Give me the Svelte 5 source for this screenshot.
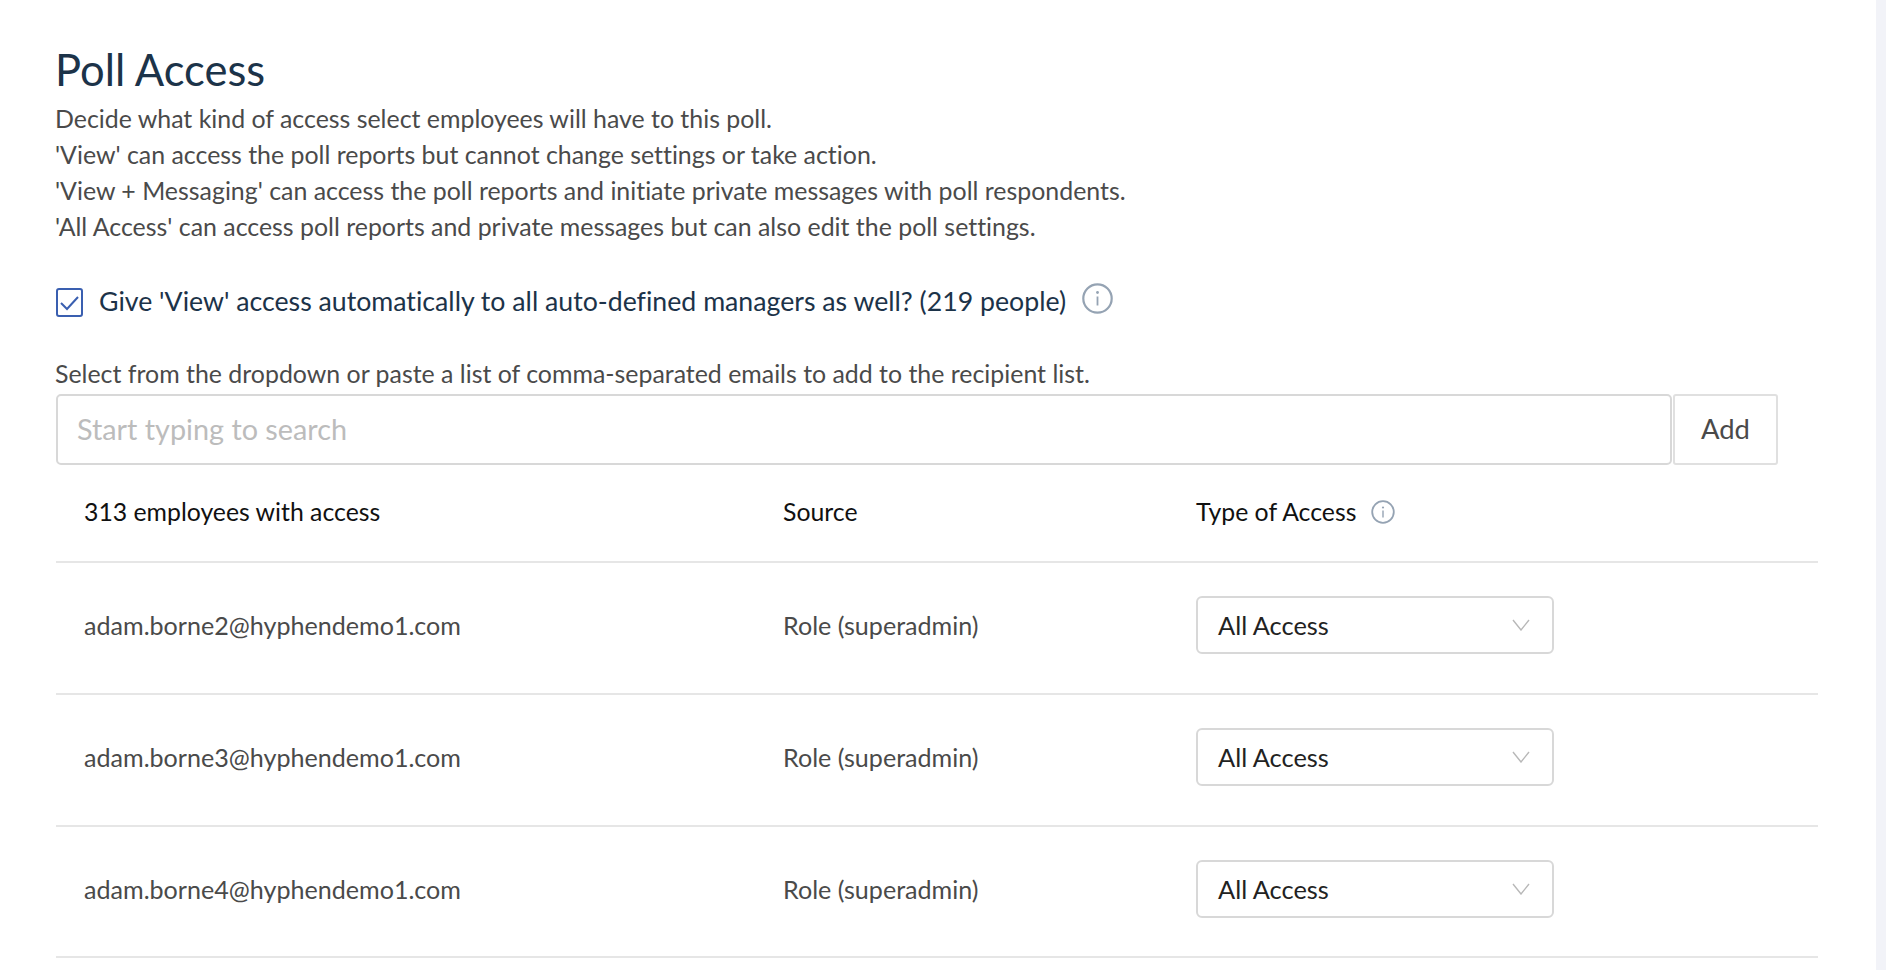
<script lang="ts">
  const rows = [
    { email: 'adam.borne2@hyphendemo1.com', source: 'Role (superadmin)', access: 'All Access' },
    { email: 'adam.borne3@hyphendemo1.com', source: 'Role (superadmin)', access: 'All Access' },
    { email: 'adam.borne4@hyphendemo1.com', source: 'Role (superadmin)', access: 'All Access' },
  ]

  let autoView = $state(true)
  let search = $state('')
</script>

<div class="page">
  <main class="panel">
    <h1>Poll Access</h1>
    <div class="intro">
      <p>Decide what kind of access select employees will have to this poll.</p>
      <p>'View' can access the poll reports but cannot change settings or take action.</p>
      <p>'View + Messaging' can access the poll reports and initiate private messages with poll respondents.</p>
      <p>'All Access' can access poll reports and private messages but can also edit the poll settings.</p>
    </div>

    <div class="auto-row">
      <button
        class="check"
        type="button"
        role="checkbox"
        aria-checked={autoView}
        aria-label="Give view access"
        onclick={() => (autoView = !autoView)}
      >
        {#if autoView}
          <svg viewBox="0 0 27 29" width="27" height="29" fill="none">
            <path d="M5 15l6 6L22 9" stroke="#3a5fb0" stroke-width="2" />
          </svg>
        {/if}
      </button>
      <span class="auto-label">Give 'View' access automatically to all auto-defined managers as well? (219 people)</span>
      <svg class="info info--lg" viewBox="0 0 31 31" width="31" height="31" fill="none">
        <circle cx="15.5" cy="15.5" r="14.2" stroke="#95a3b3" stroke-width="2.2" />
        <circle cx="15.5" cy="9.5" r="1.4" fill="#95a3b3" />
        <path d="M15.5 13.5v9" stroke="#95a3b3" stroke-width="1.8" />
      </svg>
    </div>

    <p class="hint">Select from the dropdown or paste a list of comma-separated emails to add to the recipient list.</p>
    <div class="search-row">
      <input class="search" placeholder="Start typing to search" bind:value={search} />
      <button class="add" type="button">Add</button>
    </div>

    <div class="table">
      <div class="row row--head">
        <span>313 employees with access</span>
        <span>Source</span>
        <span class="type-head">
          Type of Access
          <svg class="info" viewBox="0 0 24 24" width="24" height="24" fill="none">
            <circle cx="12" cy="12" r="10.8" stroke="#95a3b3" stroke-width="1.8" />
            <circle cx="12" cy="7.5" r="1.1" fill="#95a3b3" />
            <path d="M12 10.5v7" stroke="#95a3b3" stroke-width="1.4" />
          </svg>
        </span>
      </div>
      {#each rows as r}
        <div class="row">
          <span>{r.email}</span>
          <span>{r.source}</span>
          <div class="select">
            <span>{r.access}</span>
            <svg viewBox="0 0 18 12" width="18" height="12" fill="none">
              <path d="M1 1l8 10 8-10" stroke="#b8b8b8" stroke-width="1.4" />
            </svg>
          </div>
        </div>
      {/each}
    </div>
  </main>
</div>

<style>
  :global(body) {
    background: #f2f3f8;
  }

  .page {
    height: 970px;
    overflow: hidden;
    font-family: Lato, sans-serif;
    font-variant-ligatures: none;
    color: #4a4a4a;
  }

  .panel {
    box-sizing: border-box;
    width: 1876px;
    height: 970px;
    padding: 43px 58px 0 56px;
    background: #fff;
  }

  h1 {
    margin: 0 0 0 -1px;
    font-size: 43.5px;
    line-height: 52px;
    font-weight: 400;
    color: #1c3349;
  }

  .intro {
    font-size: 24.9px;
    line-height: 36px;
    margin: 5px 0 0 -1px;
  }

  .intro p {
    margin: 0;
  }

  .auto-row {
    display: flex;
    align-items: center;
    margin-top: 36px;
    height: 37px;
  }

  .check {
    box-sizing: border-box;
    width: 27px;
    height: 29px;
    padding: 0;
    margin-top: 7px;
    border: 2px solid #3a5fb0;
    border-radius: 3px;
    background: #fff;
    display: flex;
  }

  .check svg {
    margin: -2px;
    flex: none;
  }

  .auto-label {
    margin-left: 16px;
    font-size: 26.7px;
    color: #1c3349;
    margin-top: 4px;
  }

  .info--lg {
    margin: 0 0 0 16px;
  }

  .hint {
    margin: 38px 0 0 -1px;
    font-size: 24.9px;
    line-height: 36px;
  }

  .search-row {
    display: flex;
    margin-top: 3px;
    margin-right: 40px;
    gap: 1px;
  }

  .search {
    flex: 1;
    box-sizing: border-box;
    height: 71px;
    padding: 0 19px 2px;
    border: 2px solid #d8d8d8;
    border-radius: 5px;
    outline: none;
    font: 400 28.8px Lato, sans-serif;
    color: #4a4a4a;
  }

  .search::placeholder {
    color: #bcbcbc;
  }

  .add {
    box-sizing: border-box;
    width: 105px;
    height: 71px;
    padding: 0 0 2px;
    border: 2px solid #e0e0e0;
    border-radius: 3px;
    background: #fff;
    font: 400 27.4px Lato, sans-serif;
    color: #4a4a4a;
  }

  .row {
    display: grid;
    grid-template-columns: 699px 413px 1fr;
    align-items: center;
    box-sizing: border-box;
    height: 131.67px;
    padding: 0 0 6px 28px;
    border-bottom: 2px solid #e6e6e6;
    font-size: 25.1px;
  }

  .row--head {
    height: 98.4px;
    padding-bottom: 3px;
    font-size: 24.8px;
    color: #111;
  }

  .type-head {
    display: flex;
    align-items: center;
    gap: 15px;
  }

  .select {
    box-sizing: border-box;
    width: 358px;
    height: 58px;
    padding: 0 22px 0 20px;
    display: flex;
    align-items: center;
    justify-content: space-between;
    border: 2px solid #d8d8d8;
    border-radius: 6px;
    font-size: 25.4px;
    color: #222;
  }
</style>
